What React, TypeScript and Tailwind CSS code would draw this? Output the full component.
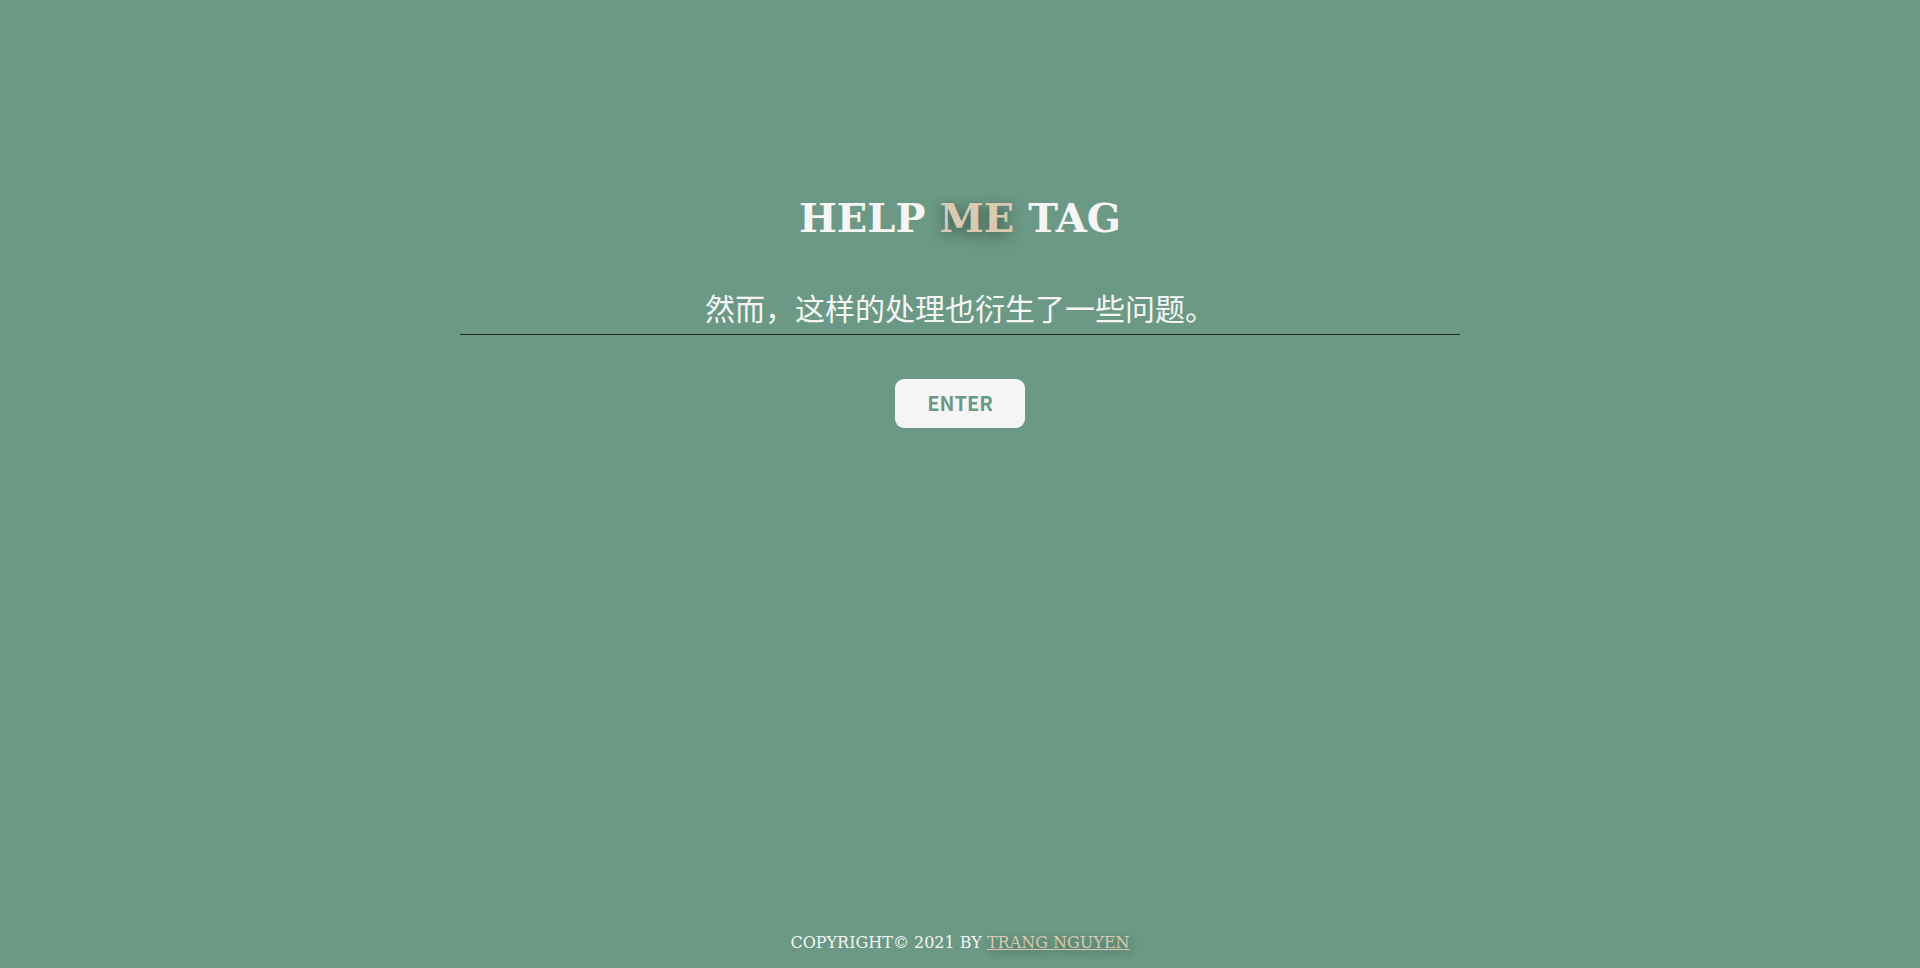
import { useState } from "react";

export default function App() {
  const [tag, setTag] = useState("然而，这样的处理也衍生了一些问题。");

  return (
    <div className="min-h-screen w-full bg-[#6b9985] flex flex-col items-center font-['DejaVu_Serif',serif]">
      <main className="flex-1 w-full flex flex-col items-center pt-[195px]">
        <h1 className="text-[40px] font-bold leading-[1.164] text-[#f5f5f5] tracking-normal">
          HELP{" "}
          <span className="text-[#dbcab2] [text-shadow:0_4px_14px_rgba(0,0,0,0.45)]">ME</span>{" "}
          TAG
        </h1>

        <input
          value={tag}
          onChange={(e) => setTag(e.target.value)}
          className="mt-[43px] w-[1000px] bg-transparent border-b border-[#1f2a25] text-center text-[30px] leading-[44px] pb-[5px] text-[#f5f5f5] outline-none font-['Noto_Sans_CJK_SC','Noto_Sans',sans-serif]"
        />

        <button className="mt-[44px] w-[130px] h-[49px] rounded-[9px] bg-[#f5f5f5] text-[#6b9985] text-[20px] leading-none font-bold font-['Noto_Sans_CJK_SC',sans-serif]">
          ENTER
        </button>
      </main>

      <footer className="pb-[15px] text-[16px] leading-[1.164] text-[#f5f5f5]">
        COPYRIGHT© 2021 BY{" "}
        <a
          href="#"
          className="underline text-[#d9c9b0] [text-shadow:2px_3px_8px_rgba(0,0,0,0.35)]"
        >
          TRANG NGUYEN
        </a>
      </footer>
    </div>
  );
}
